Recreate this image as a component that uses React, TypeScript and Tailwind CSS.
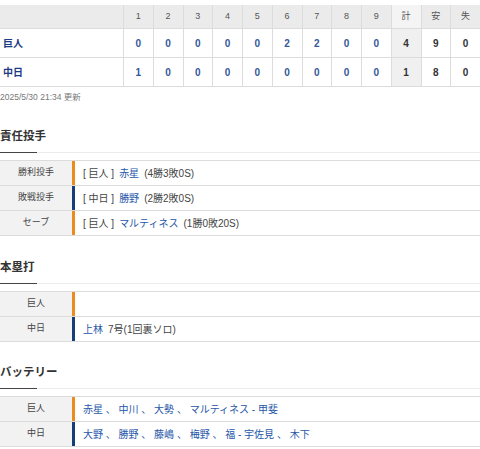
const innings = ["1", "2", "3", "4", "5", "6", "7", "8", "9"];

const teams = [
  { name: "巨人", scores: ["0", "0", "0", "0", "0", "2", "2", "0", "0"], r: "4", h: "9", e: "0" },
  { name: "中日", scores: ["1", "0", "0", "0", "0", "0", "0", "0", "0"], r: "1", h: "8", e: "0" },
];

const ORANGE = "bg-[#ec8b1e]";
const NAVY = "bg-[#163f7a]";

function Heading({ title, className }: { title: string; className?: string }) {
  return (
    <div className={className}>
      <div className="text-[11.5px] font-bold text-[#333] leading-[14px]">{title}</div>
      <div className="mt-[9px] h-[1px] bg-[#ececec]">
        <div className="w-[37px] h-[1px] bg-[#444]" />
      </div>
    </div>
  );
}

function Row({ label, bar, children }: { label: string; bar: string; children?: React.ReactNode }) {
  return (
    <div className="flex h-[25px] border-b border-[#dcdcdc]">
      <div className="w-[72px] shrink-0 bg-[#f2f2f2] flex items-center justify-center text-[9px] text-[#444]">
        {label}
      </div>
      <div className={`w-[3px] shrink-0 ${bar}`} />
      <div className="flex-1 flex items-center pl-[8px] text-[10px] text-[#444] whitespace-nowrap">{children}</div>
    </div>
  );
}

const A = ({ children }: { children: React.ReactNode }) => (
  <span className="text-[#2556a8]">{children}</span>
);

export default function App() {
  return (
    <div
      className="w-[480px] h-[449px] overflow-hidden bg-white"
      style={{ fontFamily: '"Liberation Sans", "Noto Sans CJK JP", sans-serif' }}
    >
      {/* Scoreboard */}
      <div className="pt-[5px]">
        <div className="flex h-[24px] bg-[#ebebeb] border-b border-[#dcdcdc] text-[9px] text-[#555]">
          <div className="w-[123px] shrink-0" />
          {innings.map((n) => (
            <div key={n} className="flex-1 flex items-center justify-center border-l border-[#dcdcdc]">
              {n}
            </div>
          ))}
          <div className="flex-1 flex items-center justify-center border-l border-[#dcdcdc] bg-[#f4f4f4]">計</div>
          <div className="flex-1 flex items-center justify-center border-l border-[#dcdcdc]">安</div>
          <div className="flex-1 flex items-center justify-center border-l border-[#dcdcdc]">失</div>
        </div>
        {teams.map((t) => (
          <div key={t.name} className="flex h-[29px] border-b border-[#dcdcdc] text-[10px] font-bold">
            <div className="w-[123px] shrink-0 flex items-center pl-[3px] text-[#1d3b84]">{t.name}</div>
            {t.scores.map((s, i) => (
              <div
                key={i}
                className="flex-1 flex items-center justify-center border-l border-[#dcdcdc] text-[#33579a]"
              >
                {s}
              </div>
            ))}
            <div className="flex-1 flex items-center justify-center border-l border-[#dcdcdc] bg-[#f0f0f0] text-[#333]">
              {t.r}
            </div>
            <div className="flex-1 flex items-center justify-center border-l border-[#dcdcdc] text-[#333]">
              {t.h}
            </div>
            <div className="flex-1 flex items-center justify-center border-l border-[#dcdcdc] text-[#333]">
              {t.e}
            </div>
          </div>
        ))}
        <div className="mt-[5px] text-[8.5px] leading-[10px] text-[#777]">2025/5/30 21:34 更新</div>
      </div>

      {/* 責任投手 */}
      <Heading title="責任投手" className="mt-[27px]" />
      <div className="mt-[7px] border-t border-[#dcdcdc]">
        <Row label="勝利投手" bar={ORANGE}>
          <span>[ 巨人 ]</span>
          <span className="ml-[5px]"><A>赤星</A></span>
          <span className="ml-[5px]">(4勝3敗0S)</span>
        </Row>
        <Row label="敗戦投手" bar={NAVY}>
          <span>[ 中日 ]</span>
          <span className="ml-[5px]"><A>勝野</A></span>
          <span className="ml-[5px]">(2勝2敗0S)</span>
        </Row>
        <Row label="セーブ" bar={ORANGE}>
          <span>[ 巨人 ]</span>
          <span className="ml-[5px]"><A>マルティネス</A></span>
          <span className="ml-[5px]">(1勝0敗20S)</span>
        </Row>
      </div>

      {/* 本塁打 */}
      <Heading title="本塁打" className="mt-[24px]" />
      <div className="mt-[7px] border-t border-[#dcdcdc]">
        <Row label="巨人" bar={ORANGE} />
        <Row label="中日" bar={NAVY}>
          <A>上林</A>
          <span className="ml-[5px]">7号(1回裏ソロ)</span>
        </Row>
      </div>

      {/* バッテリー */}
      <Heading title="バッテリー" className="mt-[23px]" />
      <div className="mt-[7px] border-t border-[#dcdcdc]">
        <Row label="巨人" bar={ORANGE}>
          <A>赤星 、 中川 、 大勢 、 マルティネス - 甲斐</A>
        </Row>
        <Row label="中日" bar={NAVY}>
          <A>大野 、 勝野 、 藤嶋 、 梅野 、 福 - 宇佐見 、 木下</A>
        </Row>
      </div>
    </div>
  );
}
